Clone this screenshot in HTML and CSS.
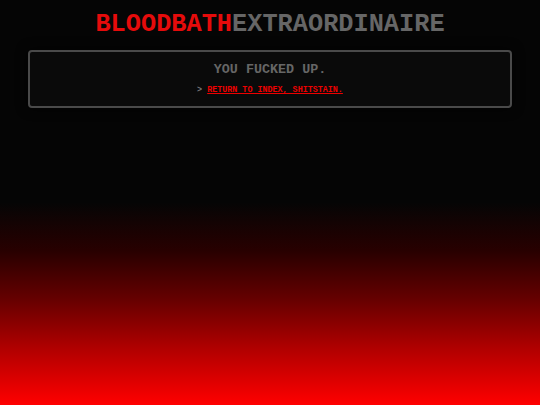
FILE: index.html
```html
<!DOCTYPE html>
<html>
<head>
  <title>404 - Bloodbath Extraordinaire</title>
  <link rel="stylesheet" href="styles.css">
</head>

<body>
  <div class="container">
    <h1 class="logo"><span class="logo-red">BLOODBATH</span><span class="logo-grey">EXTRAORDINAIRE</span></h1>

    <div class="panel">
      <h2 class="panel-title">YOU FUCKED UP.</h2>
      <p class="panel-link">&gt; <a href="index.html">RETURN TO INDEX, SHITSTAIN.</a></p>
    </div>
  </div>
</body>
</html>
```

FILE: styles.css
```css
html {
  height: 100%;
}

body {
  margin: 0;
  min-height: 100%;
  /* black top half, bleeding into red at the bottom */
  background: linear-gradient(to bottom,
    #050505 0%,
    #050505 50%,
    #280000 62%,
    #660000 74%,
    #b00000 86%,
    #f00 100%);
  font-family: "Liberation Mono", "DejaVu Sans Mono", monospace;
  color: #666;
}

.container {
  padding: 0 28px;
}

.logo {
  margin: 0;
  padding-top: 9px;
  height: 41px;
  font-size: 25.3px;
  line-height: 32px;
  font-weight: bold;
  text-align: center;
}

.logo-red {
  color: #e50b0b;
}

.logo-grey {
  color: #666;
}

.panel {
  border: 2px solid #4a4a4a;
  border-radius: 4px;
  background: #0a0a0a;
  box-shadow: 0 0 12px rgba(0, 0, 0, 0.8);
  padding: 9px 10px 10px;
  text-align: center;
}

.panel-title {
  margin: 0;
  font-size: 13.4px;
  line-height: 18px;
  font-weight: bold;
  color: #666;
}

.panel-link {
  margin: 5px 0 0;
  font-size: 8.4px;
  line-height: 12px;
  font-weight: bold;
  color: #777;
}

.panel-link a {
  color: #e00;
}
```
